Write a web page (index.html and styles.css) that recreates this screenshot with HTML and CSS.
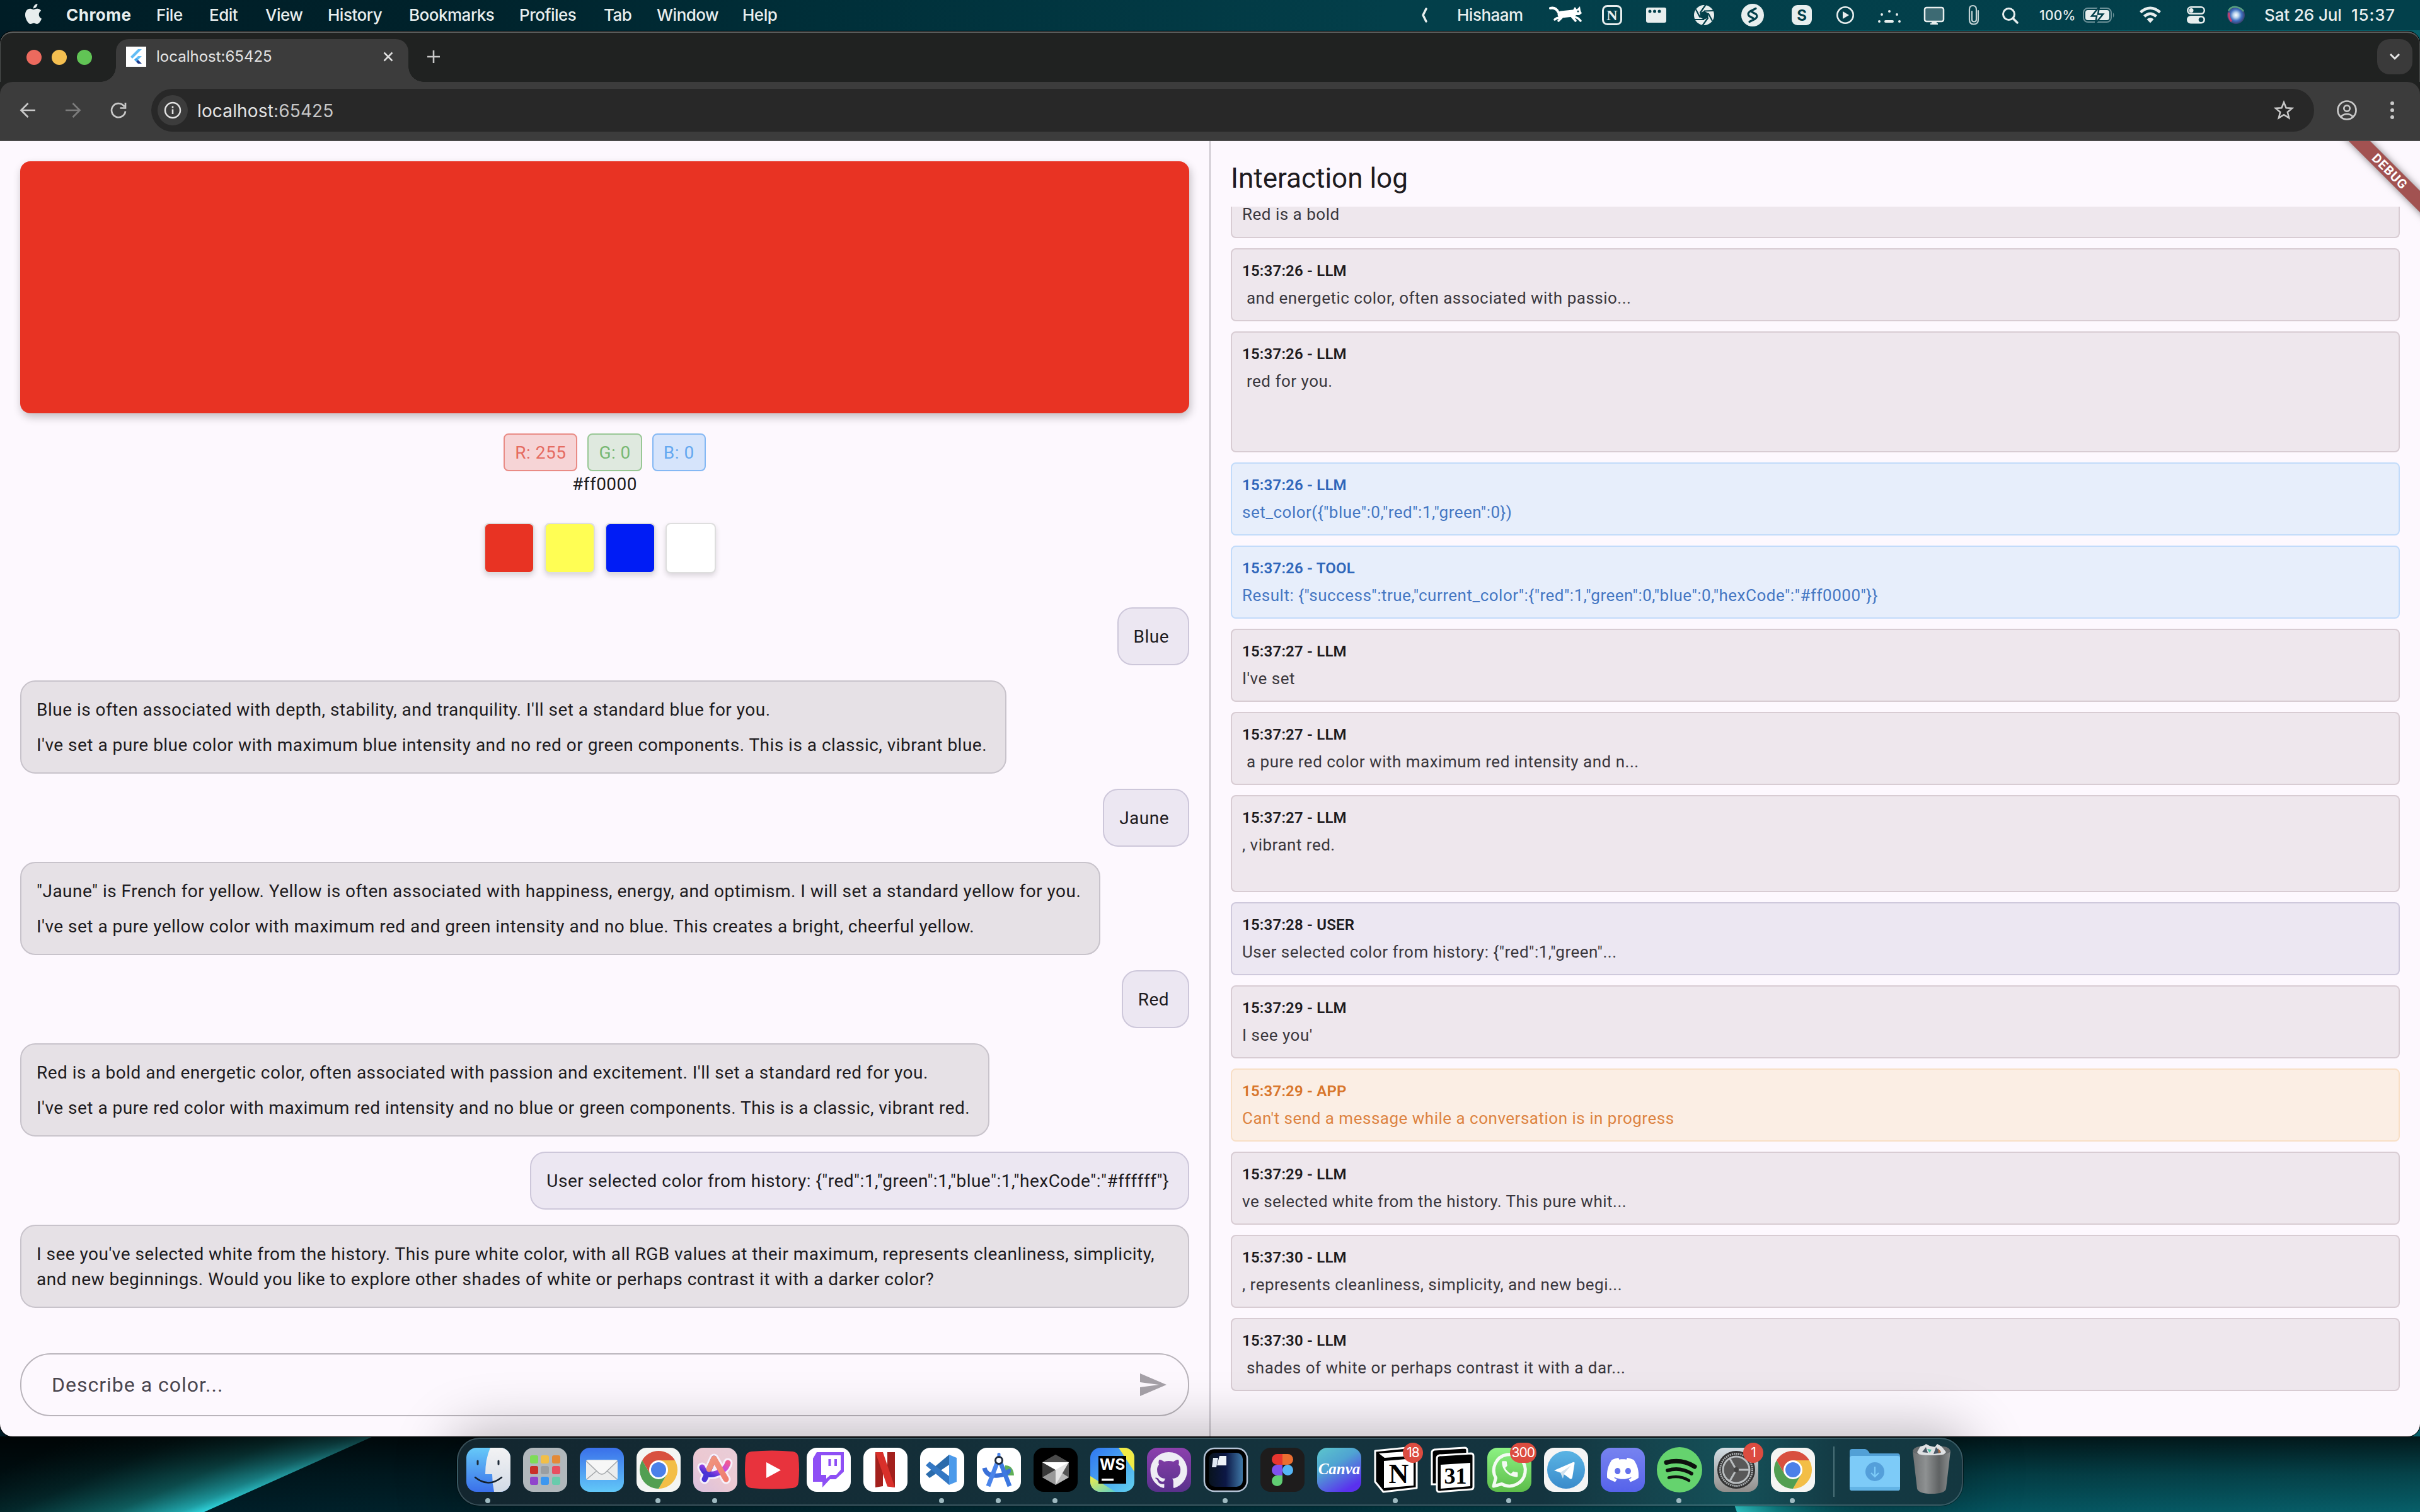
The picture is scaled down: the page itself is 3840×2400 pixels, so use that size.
FILE: index.html
```html
<!DOCTYPE html>
<html lang="en">
<head>
<meta charset="utf-8">
<title>localhost:65425</title>
<link rel="stylesheet" href="styles.css">
</head>
<body>
<svg class="defs" width="0" height="0" aria-hidden="true">
  <defs>
    <linearGradient id="gBlue" x1="0" y1="0" x2="0" y2="1"><stop offset="0" stop-color="#66c9f8"/><stop offset="1" stop-color="#3b70ea"/></linearGradient>
    <linearGradient id="gFace" x1="0" y1="0" x2="0" y2="1"><stop offset="0" stop-color="#f3f3f4"/><stop offset="1" stop-color="#d2dae6"/></linearGradient>
    <linearGradient id="gMail" x1="0" y1="0" x2="0" y2="1"><stop offset="0" stop-color="#3a70ea"/><stop offset="1" stop-color="#62c8f8"/></linearGradient>
    <linearGradient id="gArc" x1="0" y1="1" x2="1" y2="0"><stop offset="0" stop-color="#d9c0de"/><stop offset=".5" stop-color="#ecc9d2"/><stop offset="1" stop-color="#e8cdd8"/></linearGradient>
    <linearGradient id="gArcA" x1="0" y1="0" x2="1" y2="1"><stop offset="0" stop-color="#f0957f"/><stop offset="1" stop-color="#ef7f70"/></linearGradient>
    <linearGradient id="gArcL" x1="0" y1="1" x2="1" y2="0"><stop offset="0" stop-color="#2c2bd0"/><stop offset=".6" stop-color="#c44be8"/><stop offset="1" stop-color="#f05a92"/></linearGradient>
    <linearGradient id="gWs" x1="0" y1="0" x2="1" y2="1"><stop offset="0" stop-color="#2f76f2"/><stop offset="1" stop-color="#62d2ee"/></linearGradient>
    <linearGradient id="gWsL" x1="0" y1="0" x2="1" y2="1"><stop offset="0" stop-color="#f5ef45"/><stop offset="1" stop-color="#5ed0c8"/></linearGradient>
    <linearGradient id="gGit" x1="0" y1="0" x2="0" y2="1"><stop offset="0" stop-color="#8c40ad"/><stop offset="1" stop-color="#59318c"/></linearGradient>
    <linearGradient id="gSim" x1="0" y1="0" x2="1" y2="0"><stop offset="0" stop-color="#08131d"/><stop offset=".5" stop-color="#0c1745"/><stop offset="1" stop-color="#3f78a6"/></linearGradient>
    <linearGradient id="gCanva" x1="0" y1="0" x2=".6" y2="1"><stop offset="0" stop-color="#5cc6cc"/><stop offset=".45" stop-color="#4fa3d2"/><stop offset="1" stop-color="#5a31ee"/></linearGradient>
    <linearGradient id="gWa" x1="0" y1="0" x2="0" y2="1"><stop offset="0" stop-color="#8cf283"/><stop offset="1" stop-color="#5dbd4a"/></linearGradient>
    <linearGradient id="gTg" x1="0" y1="0" x2="0" y2="1"><stop offset="0" stop-color="#5ab4e4"/><stop offset="1" stop-color="#3a8bcb"/></linearGradient>
    <linearGradient id="gDc" x1="0" y1="0" x2="0" y2="1"><stop offset="0" stop-color="#7783f0"/><stop offset="1" stop-color="#5663ea"/></linearGradient>
    <linearGradient id="gSet" x1="0" y1="0" x2="0" y2="1"><stop offset="0" stop-color="#d3dee4"/><stop offset="1" stop-color="#918e8b"/></linearGradient>
    <linearGradient id="gTrash" x1="0" y1="0" x2="1" y2="0"><stop offset="0" stop-color="#6f7273"/><stop offset=".35" stop-color="#8e9192"/><stop offset=".7" stop-color="#5f6263"/><stop offset="1" stop-color="#8b8e8f"/></linearGradient>
    <radialGradient id="gSiri"><stop offset="0" stop-color="#fff"/><stop offset=".3" stop-color="#b9d3ee"/><stop offset=".65" stop-color="#3f6fc0"/><stop offset="1" stop-color="#37406e"/></radialGradient>
    <linearGradient id="gRay" gradientUnits="userSpaceOnUse" x1="324" y1="120" x2="246" y2="-55"><stop offset="0" stop-color="#30d6de"/><stop offset=".08" stop-color="#20a5ab"/><stop offset=".3" stop-color="#0f5f60"/><stop offset=".65" stop-color="#04292c"/><stop offset="1" stop-color="#001317"/></linearGradient>
    <linearGradient id="gRay2" gradientUnits="userSpaceOnUse" x1="2750" y1="0" x2="2980" y2="0"><stop offset="0" stop-color="#36e0e0"/><stop offset=".3" stop-color="#0f8d92"/><stop offset="1" stop-color="#064e58" stop-opacity="0"/></linearGradient>
    <linearGradient id="gShade" x1="0" y1="0" x2="0" y2="1"><stop offset="0" stop-color="#000" stop-opacity=".75"/><stop offset=".5" stop-color="#000" stop-opacity=".3"/><stop offset="1" stop-color="#000" stop-opacity="0"/></linearGradient>
    <symbol id="chrome" viewBox="0 0 70 70">
      <rect width="70" height="70" rx="16" fill="#f4f5f3"/>
      <path d="M9 20A30 30 0 0 1 61 20H35L22 42.500Z" fill="#d8503f"/>
      <path d="M61 20A30 30 0 0 1 35 65L48 42.500 35 20Z" fill="#f3be46"/>
      <path d="M35 65A30 30 0 0 1 9 20L22 42.500H48Z" fill="#529f52"/>
      <circle cx="35" cy="35" r="15" fill="#fff"/><circle cx="35" cy="35" r="12" fill="#4b80e8"/>
    </symbol>
  </defs>
</svg>
<div class="screen">
  <svg class="wallpaper" viewBox="0 0 3840 120" aria-hidden="true">
    <path d="M0 0H592L324 120H0Z" fill="url(#gRay)"/>
    <path d="M2742 80H3000V120H2756Z" fill="url(#gRay2)"/>
    <rect width="3840" height="120" fill="url(#gShade)"/>
  </svg>

  <header class="menubar">
    <nav class="menus">
      <svg class="apple" viewBox="0 0 24 24" width="32" height="32"><path fill="#e8eeee" d="M12.152 6.896c-.948 0-2.415-1.078-3.960-1.040-2.040.027-3.910 1.183-4.961 3.014-2.117 3.675-.546 9.103 1.519 12.090 1.013 1.454 2.208 3.090 3.792 3.039 1.520-.065 2.090-.987 3.935-.987 1.831 0 2.350.987 3.960.948 1.637-.026 2.676-1.480 3.676-2.948 1.156-1.688 1.636-3.325 1.662-3.415-.039-.013-3.182-1.221-3.220-4.857-.026-3.040 2.480-4.494 2.597-4.559-1.429-2.090-3.623-2.324-4.390-2.376-2-.156-3.675 1.090-4.610 1.090zM15.530 3.830c.843-1.012 1.400-2.427 1.245-3.830-1.207.052-2.662.805-3.532 1.818-.780.896-1.454 2.338-1.273 3.714 1.338.104 2.715-.688 3.559-1.701"/></svg>
      <span class="menu-app">Chrome</span><span>File</span><span>Edit</span><span>View</span><span>History</span><span>Bookmarks</span><span>Profiles</span><span>Tab</span><span>Window</span><span>Help</span>
    </nav>
    <div class="status">
      <svg width="12" height="48"><path d="M8 14 3 24l5 10" fill="none" stroke="#e8eeee" stroke-width="3.500" stroke-linecap="round" stroke-linejoin="round"/></svg>
      <span>Hishaam</span>
      <svg width="56" height="48"><g fill="none" stroke="#fff" stroke-linecap="round" stroke-linejoin="round"><path d="M2 13q9-2 13 7" stroke-width="4"/><path d="M19 23 38 21" stroke-width="11"/><path d="M38 21 45 19" stroke-width="9"/><path d="M20 27 12 29 9 31M20 28l-5 5M39 26l7 3 4 4M36 26l6 7" stroke-width="3.500"/></g><path d="M38 16l3-5 3 4 5-5 1 7 2 4-4 3h-8z" fill="#fff"/><circle cx="46" cy="18" r="1.500" fill="#033f4a"/></svg>
      <svg width="34" height="48"><rect x="1.500" y="9.500" width="29" height="29" rx="7" fill="none" stroke="#e8eeee" stroke-width="3"/><text x="16" y="32" class="serif-n">N</text></svg>
      <svg width="34" height="48"><rect y="12" width="32" height="24" rx="3" fill="#e8eeee"/><g fill="#033f4a"><circle cx="6" cy="18" r="2.500"/><circle cx="13.500" cy="18" r="2.500"/><circle cx="21" cy="18" r="2.500"/></g></svg>
      <svg width="34" height="48"><circle cx="16" cy="24" r="16" fill="#e8eeee"/><path d="M16 17.500 22.500 21v7L16 31l-6.500-3.500v-7Z" fill="#033f4a"/><path d="M9.500 20.500 19 7M16 17.500 31 17M22.500 21 29 33M22.500 28 13 41M16 31 1 31M9.500 27.500 3 15" stroke="#033f4a" stroke-width="2.200"/></svg>
      <svg width="38" height="48"><circle cx="18" cy="24" r="18" fill="#e8eeee"/><path d="M23 13.500 14 18q-5 3.500-1.500 7.500L19 29M13 34.500 22 30q5-3.500 1.500-7.500L17 19" fill="none" stroke="#033f4a" stroke-width="3.200" stroke-linecap="round"/></svg>
      <svg width="34" height="48"><rect y="8" width="32" height="32" rx="9" fill="#e8eeee"/><text x="16" y="32.500" class="bold-s">S</text></svg>
      <svg width="30" height="48"><circle cx="14" cy="24" r="12.700" fill="none" stroke="#e8eeee" stroke-width="2.600"/><path d="M10 18v12l10-6z" fill="#e8eeee"/></svg>
      <svg width="38" height="48" fill="#e8eeee"><circle cx="2" cy="34" r="2"/><circle cx="6" cy="23" r="2"/><circle cx="18" cy="18" r="2"/><circle cx="30" cy="23" r="2"/><circle cx="34" cy="34" r="2"/><rect x="10" y="32" width="15" height="4" rx="2"/></svg>
      <svg width="36" height="48"><rect x="2" y="12" width="30" height="22" rx="3" fill="#3d6a73" stroke="#e8eeee" stroke-width="2.500"/><path d="M13 34h8v3h2v2H11v-2h2z" fill="#e8eeee"/></svg>
      <svg width="20" height="48"><path d="M16 17v14q0 7.500-7 7.500T2 31V15q0-6 5.500-6t5.500 6v16q0 3.500-3.500 3.500T6 31V18" fill="none" stroke="#c3d2d4" stroke-width="2.200" stroke-linecap="round"/></svg>
      <svg width="28" height="48"><circle cx="10.500" cy="22.500" r="9" fill="none" stroke="#e8eeee" stroke-width="3"/><path d="M17 29l7 7" stroke="#e8eeee" stroke-width="3.500" stroke-linecap="round"/></svg>
      <span class="percent">100%</span>
      <svg width="54" height="48"><rect x="1" y="13" width="44" height="22" rx="7" fill="none" stroke="#6b9097" stroke-width="2"/><path d="M48 20q3 4 0 8z" fill="#6b9097"/><rect x="4" y="16" width="38" height="16" rx="4" fill="#e8eeee"/><path d="M26 11 14 25.500h8L20 37 32 22.500h-8z" fill="#e8eeee" stroke="#033f4a" stroke-width="2.500"/></svg>
      <svg width="36" height="48"><g fill="none" stroke="#e8eeee" stroke-width="4.500"><path d="M1.500 19.500q15.500-13.500 31 0"/><path d="M7.500 26q9.500-8.500 19 0"/></g><path d="M11.500 30.500q5.500-4.500 11 0L17 36.500z" fill="#e8eeee"/></svg>
      <svg width="32" height="48"><rect x="1.300" y="11.300" width="26.500" height="10.500" rx="5.200" fill="none" stroke="#e8eeee" stroke-width="2.500"/><circle cx="7" cy="16.500" r="3.500" fill="#e8eeee"/><rect y="25" width="29" height="12.500" rx="6.200" fill="#e8eeee"/><circle cx="22.500" cy="31.200" r="3.800" fill="#033f4a"/></svg>
      <svg width="30" height="48"><circle cx="14" cy="24" r="14" fill="url(#gSiri)"/><path d="M2 17Q6 10 14 11T26 18" fill="none" stroke="#58a07e" stroke-width="2.500"/><path d="M3 20Q2 28 7 34" fill="none" stroke="#c83f6c" stroke-width="3"/></svg>
      <span>Sat 26 Jul</span><span class="clock">15:37</span>
    </div>
  </header>

  <main class="window">
    <div class="tabstrip">
      <div class="lights"><i class="red"></i><i class="amber"></i><i class="green"></i></div>
      <div class="tab">
        <svg class="favicon" width="32" height="32"><rect width="32" height="32" fill="#fff"/><path d="M19 4h6L10 19l-3-3z" fill="#62bdf5"/><path d="M19 15h6l-6 6h-6z" fill="#62bdf5"/><path d="M13 21l3-3 3 3-3 3z" fill="#3fa3ea"/><path d="M16 24l3-3 6 6h-6z" fill="#1b3d8f"/></svg>
        <span class="tab-title">localhost:65425</span>
        <svg class="tab-close" width="16" height="16"><path d="M1.500 1.500l13 13M14.500 1.500l-13 13" stroke="#dedede" stroke-width="2.500"/></svg>
      </div>
      <svg class="new-tab" width="20" height="20"><path d="M10 0v20M0 10h20" stroke="#c9c9c9" stroke-width="2.600"/></svg>
      <button class="tab-search"><svg width="20" height="14"><path d="M3 3l7 7 7-7" fill="none" stroke="#e5e5e5" stroke-width="3"/></svg></button>
    </div>
    <div class="toolbar">
      <svg width="26" height="26"><path d="M25 13H3M13.500 2 2.500 13l11 11" fill="none" stroke="#c9c9c9" stroke-width="2.700"/></svg>
      <svg class="forward" width="26" height="26"><path d="M1 13h22M12.500 2l11 11-11 11" fill="none" stroke="#7c7c7c" stroke-width="2.700"/></svg>
      <svg class="reload" width="26" height="26"><path d="M22.500 7.500A11 11 0 1 0 24 14.500M24 1v8.500h-8.500" fill="none" stroke="#c9c9c9" stroke-width="2.700"/></svg>
      <div class="omnibox">
        <span class="site-info"><svg width="28" height="28"><circle cx="14" cy="14" r="12" fill="none" stroke="#e3e3e3" stroke-width="2.500"/><path d="M14 12.500v7.500M14 7.500v3" stroke="#e3e3e3" stroke-width="2.600"/></svg></span>
        <span class="url">localhost<span class="port">:65425</span></span>
        <svg class="star" width="32" height="32"><path d="M16 3.500l3.600 8.700 9.400.7-7.200 6.100 2.300 9.200-8.100-5-8.100 5 2.300-9.200L3 12.900l9.400-.7z" fill="none" stroke="#c9c9c9" stroke-width="2.600"/></svg>
      </div>
      <svg class="profile" width="32" height="32"><g fill="none" stroke="#c9c9c9" stroke-width="2.700"><circle cx="16" cy="16" r="14.500"/><circle cx="16" cy="13" r="4.700"/><path d="M6.500 26.500Q10 22 16 22t9.500 4.500"/></g></svg>
      <svg class="kebab" width="8" height="32" fill="#c9c9c9"><circle cx="4" cy="5" r="3"/><circle cx="4" cy="16" r="3"/><circle cx="4" cy="27" r="3"/></svg>
    </div>

    <div class="content">
      <section class="chat">
        <div class="preview"></div>
        <div class="chips"><span class="chip chip-r">R: 255</span><span class="chip chip-g">G: 0</span><span class="chip chip-b">B: 0</span></div>
        <div class="hex">#ff0000</div>
        <div class="history"><i class="sw-red"></i><i class="sw-yellow"></i><i class="sw-blue"></i><i class="sw-white"></i></div>
        <div class="messages">
          <div class="msg user"><p>Blue</p></div>
          <div class="msg bot"><p>Blue is often associated with depth, stability, and tranquility. I'll set a standard blue for you.</p><p>I've set a pure blue color with maximum blue intensity and no red or green components. This is a classic, vibrant blue.</p></div>
          <div class="msg user"><p>Jaune</p></div>
          <div class="msg bot"><p>"Jaune" is French for yellow. Yellow is often associated with happiness, energy, and optimism. I will set a standard yellow for you.</p><p>I've set a pure yellow color with maximum red and green intensity and no blue. This creates a bright, cheerful yellow.</p></div>
          <div class="msg user"><p>Red</p></div>
          <div class="msg bot"><p>Red is a bold and energetic color, often associated with passion and excitement. I'll set a standard red for you.</p><p>I've set a pure red color with maximum red intensity and no blue or green components. This is a classic, vibrant red.</p></div>
          <div class="msg user"><p>User selected color from history: {"red":1,"green":1,"blue":1,"hexCode":"#ffffff"}</p></div>
          <div class="msg bot"><p>I see you've selected white from the history. This pure white color, with all RGB values at their maximum, represents cleanliness, simplicity, and new beginnings. Would you like to explore other shades of white or perhaps contrast it with a darker color?</p></div>
        </div>
        <div class="composer"><span>Describe a color...</span><svg viewBox="0 0 24 24" width="48" height="48"><path d="M2.010 21 23 12 2.010 3 2 10l15 2-15 2z" fill="#a6a1a8"/></svg></div>
      </section>

      <section class="log">
        <h1>Interaction log</h1>
        <div class="entries">
          <article class="entry entry-cut"><p>Red is a bold</p></article>
          <article class="entry"><h2>15:37:26 - LLM</h2><p> and energetic color, often associated with passio...</p></article>
          <article class="entry"><h2>15:37:26 - LLM</h2><p> red for you.

&nbsp;</p></article>
          <article class="entry tool"><h2>15:37:26 - LLM</h2><p>set_color({"blue":0,"red":1,"green":0})</p></article>
          <article class="entry tool"><h2>15:37:26 - TOOL</h2><p>Result: {"success":true,"current_color":{"red":1,"green":0,"blue":0,"hexCode":"#ff0000"}}</p></article>
          <article class="entry"><h2>15:37:27 - LLM</h2><p>I've set</p></article>
          <article class="entry"><h2>15:37:27 - LLM</h2><p> a pure red color with maximum red intensity and n...</p></article>
          <article class="entry"><h2>15:37:27 - LLM</h2><p>, vibrant red.
&nbsp;</p></article>
          <article class="entry by-user"><h2>15:37:28 - USER</h2><p>User selected color from history: {"red":1,"green"...</p></article>
          <article class="entry"><h2>15:37:29 - LLM</h2><p>I see you'</p></article>
          <article class="entry warning"><h2>15:37:29 - APP</h2><p>Can't send a message while a conversation is in progress</p></article>
          <article class="entry"><h2>15:37:29 - LLM</h2><p>ve selected white from the history. This pure whit...</p></article>
          <article class="entry"><h2>15:37:30 - LLM</h2><p>, represents cleanliness, simplicity, and new begi...</p></article>
          <article class="entry"><h2>15:37:30 - LLM</h2><p> shades of white or perhaps contrast it with a dar...</p></article>
        </div>
      </section>
      <div class="debug">DEBUG</div>
    </div>
  </main>

  <footer class="dock">
    <div class="app running"><svg viewBox="0 0 70 70"><rect width="70" height="70" rx="16" fill="url(#gBlue)"/><path d="M38 0H54A16 16 0 0 1 70 16V54A16 16 0 0 1 54 70H44Q41 56 41 42H30Q30 18 38 0Z" fill="url(#gFace)"/><path d="M18 21v5M51 21v5" stroke="#1d2a38" stroke-width="3" stroke-linecap="round"/><path d="M14 47Q35 64 56 47" fill="none" stroke="#14202c" stroke-width="2.500" stroke-linecap="round"/></svg></div>
    <div class="app"><svg viewBox="0 0 70 70"><rect width="70" height="70" rx="16" fill="#b1b8bc"/><g><rect x="11" y="12" width="13" height="13" rx="3" fill="#7edc58"/><rect x="28" y="12" width="13" height="13" rx="3" fill="#f2bf47"/><rect x="46" y="12" width="13" height="13" rx="3" fill="#e38a37"/><rect x="11" y="29" width="13" height="13" rx="3" fill="#c93029"/><rect x="28" y="29" width="13" height="13" rx="3" fill="#9a9ea1"/><rect x="46" y="29" width="13" height="13" rx="3" fill="#e84e60"/><rect x="11" y="46" width="13" height="13" rx="3" fill="#9046cc"/><rect x="28" y="46" width="13" height="13" rx="3" fill="#3d97f0"/><rect x="46" y="46" width="13" height="13" rx="3" fill="#69cbac"/></g></svg></div>
    <div class="app"><svg viewBox="0 0 70 70"><rect width="70" height="70" rx="16" fill="url(#gMail)"/><rect x="10" y="19" width="50" height="32" rx="3" fill="#eceded"/><path d="M11 50 30 34M59 50 40 34" stroke="#a2a5a8" stroke-width="1.500"/><path d="M10 21 30 40Q35 44 40 40L60 21" fill="#f7f7f7" stroke="#a2a5a8" stroke-width="1.500"/></svg></div>
    <div class="app running"><svg><use href="#chrome"/></svg></div>
    <div class="app running"><svg viewBox="0 0 70 70"><rect width="70" height="70" rx="16" fill="url(#gArc)"/><g fill="none" stroke-linecap="round" stroke-linejoin="round"><g stroke="#f6f0fb" stroke-width="15"><path d="M18 50 33 17 52 50"/><path d="M14 31Q20 46 36 41T55 24"/></g><path d="M14 31Q20 46 36 41T55 24" stroke="url(#gArcL)" stroke-width="9"/><path d="M18 50 33 17" stroke="#4b35d6" stroke-width="9"/><path d="M25 34 33 17 52 50" stroke="url(#gArcA)" stroke-width="9"/></g></svg></div>
    <div class="app"><svg class="wide" viewBox="0 0 86 70"><path d="M10 6Q43 3 76 6 84 7 85 15 87 35 85 55 84 63 76 64 43 67 10 64 2 63 1 55-1 35 1 15 2 7 10 6Z" fill="#e8333d"/><path d="M34 23v25l23-12.500z" fill="#fff"/></svg></div>
    <div class="app"><svg viewBox="0 0 70 70"><rect width="70" height="70" rx="16" fill="#fff"/><path d="M10 17 16 7H59V38L46 50H37L25 63V54H10Z" fill="#8e4ff5"/><path d="M23 12H54V35L47 43H38L31 49V43H23Z" fill="#fff"/><path d="M36.500 18v11M46 18v11" stroke="#8e4ff5" stroke-width="4"/></svg></div>
    <div class="app"><svg viewBox="0 0 70 70"><rect width="70" height="70" rx="16" fill="#fff"/><path d="M19 7H31V61L19 63ZM38 7H50V63L38 61Z" fill="#a3201c"/><path d="M19 7H31L50 63 38 61.500Z" fill="#d9302a"/></svg></div>
    <div class="app running"><svg viewBox="0 0 70 70"><rect width="70" height="70" rx="16" fill="#fff"/><path d="M46 11V27L15 48 9 42Z" fill="#2b6bab"/><path d="M9 28 15 22 46 45V59Z" fill="#3478c4"/><path d="M46 11 58 16V54L46 59Z" fill="#4c9aea"/></svg></div>
    <div class="app running"><svg viewBox="0 0 70 70"><rect width="70" height="70" rx="16" fill="#fff"/><path d="M45 28Q58 28 59 44H42Z" fill="#5faf57"/><path d="M12 32Q15 46 34 44T50 34" fill="none" stroke="#3a70d8" stroke-width="7"/><rect x="32.500" y="8" width="5" height="12" rx="2" fill="#4a84ea"/><path d="M33 22 18 61" stroke="#4a84ea" stroke-width="7"/><path d="M37 22 52 61" stroke="#3c78e0" stroke-width="7"/><circle cx="35" cy="20" r="5.500" fill="#fff" stroke="#1f2b3c" stroke-width="3"/></svg></div>
    <div class="app running"><svg viewBox="0 0 70 70"><rect width="70" height="70" rx="16" fill="#000"/><path d="M35 11 56 23V47L35 59 14 47V23Z" fill="#555"/><path d="M35 11 56 23H14Z" fill="#4a4a4a"/><path d="M14 23V47L35 35Z" fill="#383838"/><path d="M14 47 35 35V59Z" fill="#999"/><path d="M35 59 56 47 45 40Z" fill="#b9b9b9"/><path d="M14 23H56L35 59V35Z" fill="#e4e4e4"/><path d="M14 23H56L35 35Z" fill="#fff"/></svg></div>
    <div class="app"><svg viewBox="0 0 70 70"><rect width="70" height="70" rx="16" fill="url(#gWs)"/><path d="M45 0H54A16 16 0 0 1 70 16V38Z" fill="#f1ea45"/><path d="M0 45V54A16 16 0 0 0 16 70H40Z" fill="url(#gWsL)"/><rect x="13" y="13" width="44" height="44" fill="#000"/><text x="35" y="35" class="ws">WS</text><rect x="18" y="49" width="19" height="3.500" fill="#fff"/></svg></div>
    <div class="app"><svg viewBox="0 0 70 70"><rect width="70" height="70" rx="16" fill="url(#gGit)"/><path transform="translate(5.500 6.300) scale(2.430)" fill="#eeedf4" d="M12 .297c-6.630 0-12 5.373-12 12 0 5.303 3.438 9.800 8.205 11.385.6.113.82-.258.82-.577 0-.285-.01-1.040-.015-2.040-3.338.724-4.042-1.610-4.042-1.610C4.422 18.070 3.633 17.700 3.633 17.700c-1.087-.744.084-.729.084-.729 1.205.084 1.838 1.236 1.838 1.236 1.070 1.835 2.809 1.305 3.495.998.108-.776.417-1.305.76-1.605-2.665-.3-5.466-1.332-5.466-5.930 0-1.310.465-2.380 1.235-3.220-.135-.303-.54-1.523.105-3.176 0 0 1.005-.322 3.300 1.230.96-.267 1.980-.399 3-.405 1.020.006 2.040.138 3 .405 2.280-1.552 3.285-1.230 3.285-1.230.645 1.653.24 2.873.12 3.176.765.84 1.230 1.910 1.230 3.220 0 4.610-2.805 5.625-5.475 5.920.42.36.81 1.096.81 2.220 0 1.606-.015 2.896-.015 3.286 0 .315.21.69.825.57C20.565 22.092 24 17.592 24 12.297c0-6.627-5.373-12-12-12"/></svg></div>
    <div class="app running"><svg viewBox="0 0 70 70"><rect x="1" y="1" width="68" height="68" rx="16" fill="#000" stroke="#b4c3d6" stroke-width="2.500"/><rect x="8" y="8" width="54" height="54" rx="10" fill="url(#gSim)"/><path d="M15 16H23L20 31H13Z" fill="#dfe7f2"/><path d="M25 13H36V28H21Z" fill="#eef2f8"/></svg></div>
    <div class="app"><svg viewBox="0 0 70 70"><rect width="70" height="70" rx="16" fill="#1e1c1c"/><path d="M35 10H26.500a8.500 8.500 0 0 0 0 17H35Z" fill="#e8352f"/><path d="M35 10H43.500a8.500 8.500 0 0 1 0 17H35Z" fill="#ea6e31"/><path d="M35 27H26.500a8.500 8.500 0 0 0 0 17H35Z" fill="#7f52ef"/><circle cx="43.500" cy="35.500" r="8.500" fill="#55b5f5"/><path d="M35 44H26.500a8.500 8.500 0 1 0 8.500 8.500Z" fill="#60ce73"/></svg></div>
    <div class="app"><svg viewBox="0 0 70 70"><rect width="70" height="70" rx="16" fill="url(#gCanva)"/><text x="35" y="42" class="canva">Canva</text></svg></div>
    <div class="app running"><svg viewBox="0 0 70 70"><path d="M2 5 52 0 68 11V64L15 70 2 54Z" fill="#000" stroke="#fff" stroke-width="3" stroke-linejoin="round"/><path d="M8 9 50 6 60 13 17 16Z" fill="#fff"/><path d="M16 21 63 17V60L16 64Z" fill="#fff"/><text x="39.500" y="56" class="notion">N</text></svg><b class="badge">18</b></div>
    <div class="app"><svg viewBox="0 0 70 70"><path d="M2 8Q2 4 6 3L54 0Q58 0 58 4V58H2Z" fill="#000" stroke="#fff" stroke-width="3"/><path d="M10 17Q10 13 14 12L64 9Q68 9 68 13V62Q68 66 64 66L14 70Q10 70 10 66Z" fill="#000" stroke="#fff" stroke-width="3"/><path d="M16 27 63 24V61L16 65Z" fill="#fff"/><text x="39.500" y="57" class="cal">31</text></svg></div>
    <div class="app running"><svg viewBox="0 0 70 70"><rect width="70" height="70" rx="16" fill="url(#gWa)"/><path d="M10 61 13.500 48A25 25 0 1 1 23 57.500Z" fill="none" stroke="#f4faf3" stroke-width="5" stroke-linejoin="round"/><path transform="translate(19 17) scale(1.400)" fill="#f4faf3" d="M6.620 10.790c1.440 2.830 3.760 5.140 6.590 6.590l2.200-2.200c.27-.27.67-.36 1.020-.24 1.120.37 2.330.57 3.570.57.55 0 1 .45 1 1V20c0 .55-.45 1-1 1-9.390 0-17-7.610-17-17 0-.55.45-1 1-1h3.500c.55 0 1 .45 1 1 0 1.250.2 2.450.57 3.570.11.35.03.74-.25 1.020l-2.200 2.200z"/></svg><b class="badge">300</b></div>
    <div class="app"><svg viewBox="0 0 70 70"><rect width="70" height="70" rx="16" fill="#f5f5f5"/><circle cx="35" cy="35" r="30" fill="url(#gTg)"/><path d="M16 36 46 23Q49 22 48.500 25L45 47Q44 51 41 49L33 43 27 40Z" fill="#fff"/><path d="M26 39.500 43 28 32 41 30 49Z" fill="#cfe1ee"/></svg></div>
    <div class="app"><svg viewBox="0 0 70 70"><rect width="70" height="70" rx="16" fill="url(#gDc)"/><path transform="translate(10 10) scale(2.090)" fill="#fff" d="M20.317 4.370a19.791 19.791 0 0 0-4.885-1.515.074.074 0 0 0-.079.037c-.211.375-.445.865-.608 1.250-1.845-.276-3.680-.276-5.487 0-.164-.393-.406-.874-.618-1.250a.077.077 0 0 0-.079-.037 19.736 19.736 0 0 0-4.885 1.515.07.07 0 0 0-.032.028C.533 9.046-.319 13.580.099 18.058a.082.082 0 0 0 .031.056c2.053 1.508 4.041 2.423 5.993 3.029a.078.078 0 0 0 .084-.028c.462-.630.873-1.295 1.226-1.994a.076.076 0 0 0-.042-.106c-.653-.248-1.274-.550-1.872-.892a.077.077 0 0 1-.008-.128c.126-.094.252-.192.372-.291a.074.074 0 0 1 .078-.011c3.928 1.793 8.180 1.793 12.061 0a.074.074 0 0 1 .079.010c.120.099.246.198.373.292a.077.077 0 0 1-.007.128 12.299 12.299 0 0 1-1.873.891.077.077 0 0 0-.041.107c.360.698.772 1.363 1.225 1.993a.076.076 0 0 0 .084.029c1.961-.607 3.950-1.522 6.002-3.029a.077.077 0 0 0 .031-.055c.500-5.177-.838-9.674-3.549-13.660a.061.061 0 0 0-.031-.029zM8.020 15.331c-1.183 0-2.157-1.086-2.157-2.419s.956-2.419 2.157-2.419c1.211 0 2.176 1.095 2.157 2.419 0 1.333-.956 2.419-2.157 2.419zm7.975 0c-1.183 0-2.157-1.086-2.157-2.419s.955-2.419 2.157-2.419c1.211 0 2.176 1.095 2.157 2.419 0 1.333-.946 2.419-2.157 2.419z"/></svg></div>
    <div class="app running"><svg viewBox="0 0 70 70"><circle cx="35" cy="35" r="36" fill="#65d36e"/><g fill="none" stroke="#0d110d" stroke-linecap="round"><path d="M14 23.500Q38 17 59 30" stroke-width="7"/><path d="M16 36Q36 30 54 41" stroke-width="5.800"/><path d="M18 47.500Q35 43 50 52" stroke-width="4.600"/></g></svg></div>
    <div class="app"><svg viewBox="0 0 70 70"><rect width="70" height="70" rx="16" fill="url(#gSet)"/><circle cx="35" cy="35" r="30" fill="#333"/><circle cx="35" cy="35" r="25.500" fill="none" stroke="#a9adaf" stroke-width="3" stroke-dasharray="2.200 1.200"/><circle cx="35" cy="35" r="21" fill="#585858" stroke="#b9bdbf" stroke-width="3"/><path d="M35 35H55M35 35 25 17.500M35 35 25 52.500" stroke="#b9bdbf" stroke-width="3"/><circle cx="35" cy="35" r="4" fill="#444"/></svg><b class="badge">1</b></div>
    <div class="app running"><svg><use href="#chrome"/></svg></div>
    <hr>
    <div class="app"><svg class="folder" viewBox="0 0 80 70"><path d="M0 6Q0 2 4 2H24Q28 2 32 9H76Q80 9 80 14V40H0Z" fill="#52a0d6"/><path d="M0 17Q0 13 4 13H76Q80 13 80 17V64Q80 68 76 68H4Q0 68 0 64Z" fill="#7dcbf8"/><path d="M0 62H80V64Q80 68 76 68H4Q0 68 0 64Z" fill="#63b4e6"/><circle cx="40" cy="38" r="15" fill="#549fda"/><path d="M40 30v15M34 40l6 6 6-6" fill="none" stroke="#7dcbf8" stroke-width="2.200"/></svg></div>
    <div class="app"><svg class="trash" viewBox="0 0 62 82"><path d="M1 12Q3 6 12 5L50 5Q59 6 61 12L54 20H8Z" fill="#686c6e"/><path d="M8 14 13 5 20 3 22 1 28 4 36 6 40 1 47 5 54 14 48 20H13Z" fill="#dfe1e3"/><path d="M16 14l6-8 3 9zM34 17l4-11 8 9z" fill="#4a5866"/><path d="M24 9l7 1-3 5z" fill="#49c4a5"/><path d="M41 8l5 5-4 3z" fill="#a5663e"/><path d="M1 12Q4 19 31 19T61 12L54 72Q52 80 31 80T8 72Z" fill="url(#gTrash)"/></svg></div>
  </footer>
</div>
</body>
</html>
```
FILE: styles.css
```css
* { box-sizing: border-box; }
html, body, p, h1, h2 { margin: 0; }
body { width: 3840px; height: 2400px; overflow: hidden; font-family: Roboto, sans-serif; }
svg { display: block; flex-shrink: 0; overflow: visible; }
.defs { position: absolute; }

.screen {
  position: relative;
  display: flex;
  flex-direction: column;
  align-items: center;
  width: 3840px;
  height: 2400px;
  background: linear-gradient(90deg, #001a24 0, #00222b 700px, #00323d 1900px, #04505b 2900px, #075f69 3840px);
  overflow: hidden;
}
.wallpaper { position: absolute; left: 0; bottom: 0; width: 3840px; height: 120px; }

/* menu bar */
.menubar {
  display: flex;
  justify-content: space-between;
  width: 100%;
  height: 48px;
  background: linear-gradient(90deg, #001d26 0, #00222b 700px, #002f39 1300px, #033f4a 2200px, #02404b 100%);
  color: #e8eeee;
  font: 500 26px/47px Inter, sans-serif;
  letter-spacing: -.5px;
  white-space: nowrap;
}
.menus {
  display: grid;
  grid-template-columns: 68px 143px 84px 89px 99px 129px 175px 134px 84px 136px 80px;
  padding-left: 37px;
}
.apple { margin-top: 6px; }
.menu-app { font-weight: 700; letter-spacing: .5px; }
.status {
  display: grid;
  grid-template-columns: 57px 146px 84px 70px 76px 75px 80px 71px 66px 72px 71px 54px 59px 69px 90px 75px 64px 59px 138px 109px;
}
.status .percent { font-size: 21px; letter-spacing: .2px; line-height: 49px; }
.status span:nth-last-child(2) { letter-spacing: -.1px; }
.status .clock { letter-spacing: .8px; }
.serif-n { font: bold 24px "Liberation Serif", serif; fill: #e8eeee; text-anchor: middle; letter-spacing: 0; }
.bold-s { font: 700 24px Inter, sans-serif; fill: #033f4a; text-anchor: middle; letter-spacing: 0; }

/* browser window */
.window {
  position: relative;
  display: flex;
  flex-direction: column;
  width: 100%;
  height: 2230px;
  margin-top: 2px;
  border-radius: 20px;
  background: #202221;
  box-shadow: 0 0 0 1px #000;
  overflow: hidden;
}
.tabstrip {
  display: flex;
  align-items: flex-start;
  height: 80px;
  border-radius: 20px 20px 0 0;
  box-shadow: inset 0 2px 0 #5f6261, inset 1px 0 0 #4b4e4d, inset -1px 0 0 #4b4e4d;
}
.lights { display: flex; gap: 16px; padding: 29px 0 0 42px; width: 184px; }
.lights i { width: 24px; height: 24px; border-radius: 50%; }
.red { background: #ec6a5e; }
.amber { background: #f4bf50; }
.green { background: #61c455; }
.tab {
  position: relative;
  display: flex;
  align-items: center;
  width: 464px;
  height: 68px;
  margin-top: 12px;
  padding: 0 24px 12px 16px;
  border-radius: 20px 20px 0 0;
  background: #3c3c3c;
}
.tab::before, .tab::after { content: ""; position: absolute; bottom: 0; width: 24px; height: 24px; }
.tab::before { left: -24px; background: radial-gradient(circle at 0 0, transparent 23.500px, #3c3c3c 24px); }
.tab::after { right: -24px; background: radial-gradient(circle at 100% 0, transparent 23.500px, #3c3c3c 24px); }
.tab-title { flex: 1; margin-left: 16px; color: #e3e3e3; font: 24px/32px Inter, sans-serif; }
.new-tab { margin: 30px 0 0 30px; }
.tab-search {
  display: flex;
  align-items: center;
  justify-content: center;
  width: 56px;
  height: 56px;
  margin: 12px 12px 0 auto;
  padding: 0;
  border: 0;
  border-radius: 20px;
  background: #3a3a3a;
}
.toolbar {
  display: flex;
  align-items: center;
  height: 94px;
  padding: 0 40px 2px 31px;
  border-bottom: 2px solid #4a4a4a;
  border-radius: 20px 20px 0 0;
  background: #3c3c3c;
}
.forward { margin-left: 46px; }
.reload { margin-left: 46px; }
.omnibox {
  display: flex;
  align-items: center;
  flex: 1;
  height: 68px;
  margin-left: 39px;
  padding: 0 32px 0 10px;
  border-radius: 34px;
  background: #282828;
}
.site-info { display: flex; align-items: center; justify-content: center; width: 48px; height: 48px; border-radius: 50%; background: #3c3c3c; }
.url { flex: 1; margin-left: 15px; padding-top: 1px; color: #e3e3e3; font: 28px/40px Inter, sans-serif; letter-spacing: .15px; }
.port { color: #c7c7c7; }
.profile { margin-left: 36px; }
.kebab { margin-left: 52px; }

/* page */
.content { position: relative; display: flex; flex: 1; background: #fdf8fe; color: #1d1b20; overflow: hidden; }
.chat { display: flex; flex-direction: column; width: 1921px; padding: 32px; border-right: 2px solid #c8c3cb; font-size: 28px; line-height: 40px; letter-spacing: .48px; }
.preview { height: 400px; border-radius: 16px; background: #e83323; box-shadow: 2px 6px 14px rgba(0, 0, 0, .24); }
.chips { display: flex; justify-content: center; gap: 16px; margin-top: 32px; }
.chip { height: 60px; padding: 9px 16px 7px; border: 2px solid; border-radius: 8px; }
.chip-r { background: #f6d4d6; border-color: #e98b85; color: #e56b61; }
.chip-g { background: #dfe9df; border-color: #98c795; color: #78b873; }
.chip-b { background: #d6e4fb; border-color: #84b8f4; color: #64a8f0; }
.hex { height: 40px; line-height: 42px; text-align: center; }
.history { display: flex; justify-content: center; gap: 16px; margin-top: 42px; padding-right: 16px; }
.history i { width: 80px; height: 80px; border: 2px solid #dedede; border-radius: 8px; box-shadow: 0 4px 8px rgba(0, 0, 0, .14); }
.sw-red { background: #e83323; }
.sw-yellow { background: #fffe54; }
.sw-blue { background: #001cf5; }
.sw-white { background: #fff; }
.messages { display: flex; flex-direction: column; align-items: flex-start; gap: 24px; margin-top: 54px; }
.msg { display: flex; flex-direction: column; gap: 16px; padding: 25px 29px 23px 24px; border: 2px solid; border-radius: 24px; }
.bot { background: #e6e1e6; border-color: #c8c3cb; }
.user { align-self: flex-end; padding-right: 30px; background: #ece7f2; border-color: #cdc7da; }
.composer {
  display: flex;
  align-items: center;
  justify-content: space-between;
  height: 100px;
  margin-top: auto;
  padding: 0 32px 0 48px;
  border: 2px solid #b9b4bb;
  border-radius: 48px;
  color: #49454f;
  font-size: 32px;
  letter-spacing: 1px;
}

/* log panel */
.log { display: flex; flex: 1; flex-direction: column; padding: 0 32px; }
.log h1 { height: 104px; padding-top: 31px; font-size: 44px; font-weight: 400; line-height: 56px; }
.entries { display: flex; flex: 1; flex-direction: column; gap: 16px; min-height: 0; overflow: hidden; }
.entry { flex-shrink: 0; padding: 16px; border: 2px solid #d8ccd3; border-radius: 8px; background: #eee7ed; }
.entry-cut { height: 50px; padding-top: 0; padding-bottom: 10px; border-top: 0; border-radius: 0 0 8px 8px; }
.entry-cut p { margin-top: -7px; }
.entry h2 { margin-bottom: 7px; padding-top: 1px; font-size: 24px; font-weight: 600; line-height: 34px; letter-spacing: .2px; }
.entry p { color: #3a373d; font-size: 26px; line-height: 38px; letter-spacing: .5px; white-space: pre-wrap; }
.tool { background: #e7eefb; border-color: #c2dbfa; color: #2f66ba; }
.tool p { color: #4577c3; }
.by-user { background: #ece7f2; border-color: #cfc9dc; }
.warning { background: #fbeee4; border-color: #f8dfc6; color: #d8762c; }
.warning p { color: #dd8341; }

.debug {
  position: absolute;
  left: 3692px;
  top: 36px;
  width: 200px;
  height: 24px;
  background: #a25251;
  box-shadow: 0 0 12px rgba(0, 0, 0, .5);
  color: #fff;
  font-size: 20.400px;
  font-weight: 700;
  line-height: 24px;
  letter-spacing: 1px;
  text-align: center;
  transform: rotate(45deg);
}

/* dock */
.dock {
  position: relative;
  display: flex;
  height: 108px;
  margin-top: 2px;
  padding: 0 3px;
  border: 2px solid rgba(190, 225, 230, .22);
  border-radius: 36px;
  background: linear-gradient(90deg, #13262f, #14313b 40%, #14343f 72%, #155159 85%, #143a44 92%, #143740);
  box-shadow: 0 0 0 1px rgba(0, 0, 0, .4), 0 0 90px 10px rgba(0, 0, 0, .28);
}
.app { position: relative; display: flex; justify-content: center; width: 90px; padding-top: 14px; }
.app svg { width: 70px; height: 70px; }
.app .wide { width: 86px; }
.app .folder { width: 80px; }
.app .trash { width: 62px; height: 82px; margin-top: -7px; }
.running::after { content: ""; position: absolute; left: 40px; top: 94px; width: 8px; height: 8px; border-radius: 50%; background: #9fbac1; }
.badge {
  position: absolute;
  top: 6px;
  right: 2px;
  min-width: 32px;
  height: 32px;
  padding: 0 3px;
  border-radius: 16px;
  background: #dc4c40;
  color: #fff;
  font: 400 21px/32px Inter, sans-serif;
  letter-spacing: -1px;
  text-align: center;
}
.dock hr { width: 2px; height: 80px; margin: 12px 19px; border: 0; background: #4a7078; }
.ws { font: 700 24px Inter, sans-serif; fill: #fff; text-anchor: middle; }
.canva { font: italic 700 25px "Liberation Serif", serif; fill: #fff; text-anchor: middle; }
.notion { font: bold 44px "Liberation Serif", serif; text-anchor: middle; }
.cal { font: bold 36px "Liberation Serif", serif; text-anchor: middle; }
```
